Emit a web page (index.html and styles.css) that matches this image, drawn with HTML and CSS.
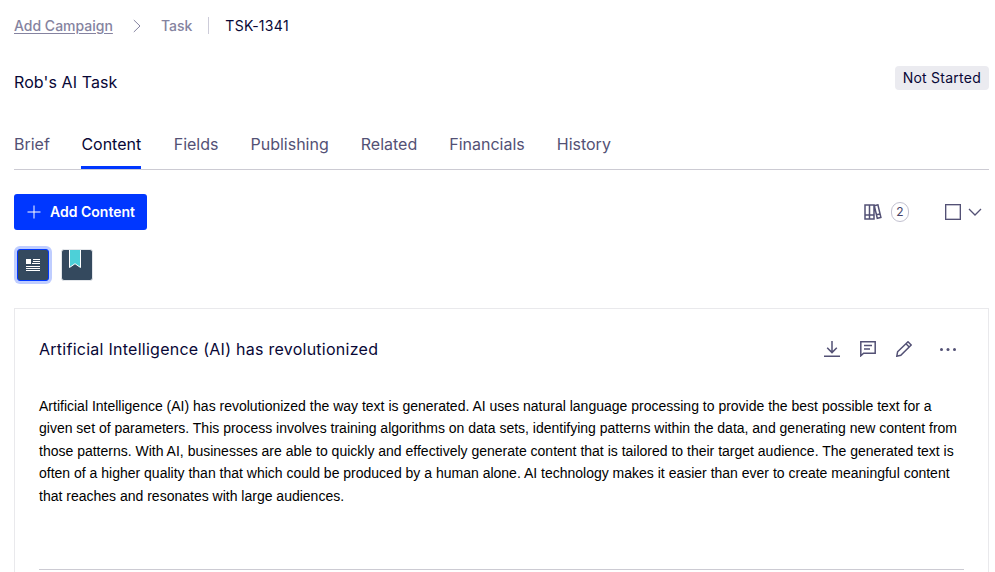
FILE: index.html
```html
<!DOCTYPE html>
<html lang="en">
<head>
    <meta charset="UTF-8">
    <meta name="viewport" content="width=device-width, initial-scale=1.0">
    <title>TSK-1341</title>
    <link rel="stylesheet" href="styles.css">
</head>
<body>
    <div class="page">
        <nav class="breadcrumb">
            <a class="crumb-link" href="#">Add Campaign</a>
            <svg class="crumb-arrow" width="8" height="14" viewBox="0 0 8 14"><path d="M.8 1l6.2 6-6.2 6"/></svg>
            <span class="crumb-type">Task</span>
            <span class="crumb-id">TSK-1341</span>
        </nav>

        <header class="task-header">
            <h1>Rob's AI Task</h1>
            <span class="status">Not Started</span>
        </header>

        <ul class="tabs">
            <li>Brief</li>
            <li class="active">Content</li>
            <li>Fields</li>
            <li>Publishing</li>
            <li>Related</li>
            <li>Financials</li>
            <li>History</li>
        </ul>

        <div class="toolbar">
            <button class="add-button">
                <svg width="14" height="14" viewBox="0 0 14 14"><path d="M7 .5v13M.5 7h13"/></svg>
                Add Content
            </button>
            <div class="toolbar-right">
                <svg class="icon" width="18" height="16" viewBox="0 0 18 16">
                    <path d="M1 1h9v14H1zM5.5 1v14M1 11h9M10.3 1.7l3.6-.9 3 12.7-3.6.8zM12.4 10.8l3.7-.9"/>
                </svg>
                <span class="count">2</span>
                <span class="checkbox"></span>
                <svg class="chevron" width="14" height="8" viewBox="0 0 14 8"><path d="M1 1l6 6 6-6"/></svg>
            </div>
        </div>

        <div class="thumbs">
            <button class="thumb selected">
                <svg width="14" height="14" viewBox="0 0 14 14">
                    <path d="M0 1h5v5H0zM7 1h7v1H7zM7 3h7v1H7zM6 5h8v1H6zM0 8h14v1H0zM0 10h14v1H0zM0 12h14v1H0z"/>
                </svg>
            </button>
            <button class="thumb">
                <svg class="bookmark" width="14" height="19" viewBox="0 0 14 19">
                    <path d="M1.5-1v18.5L7 13.7l5.5 3.8V-1z"/>
                </svg>
            </button>
        </div>

        <section class="card">
            <div class="card-header">
                <h2>Artificial Intelligence (AI) has revolutionized</h2>
                <div class="actions">
                    <svg class="icon" width="16" height="16" viewBox="0 0 16 16"><path d="M8 0v11.5M3.2 6.8L8 11.6l4.8-4.8M0 15.2h16"/></svg>
                    <svg class="icon" width="16" height="16" viewBox="0 0 16 16"><path d="M.8.8h14.4v11.4H3.6L.8 14.8zM4 4.5h8M4 8h6"/></svg>
                    <svg class="icon" width="16" height="16" viewBox="0 0 16 16"><path d="M1.6 10.8L12 .8l3.2 3.2L4.8 14.2l-4 1zM10 2.8l3.2 3.2"/></svg>
                    <svg class="dots" width="16" height="4" viewBox="0 0 16 4"><circle cx="1.5" cy="2.5" r="1.5"/><circle cx="8" cy="2.5" r="1.5"/><circle cx="14.5" cy="2.5" r="1.5"/></svg>
                </div>
            </div>
            <p class="card-text">Artificial Intelligence (AI) has revolutionized the way text is generated. AI uses natural language processing to provide the best possible text for a given set of parameters. This process involves training algorithms on data sets, identifying patterns within the data, and generating new content from those patterns. With AI, businesses are able to quickly and effectively generate content that is tailored to their target audience. The generated text is often of a higher quality than that which could be produced by a human alone. AI technology makes it easier than ever to create meaningful content that reaches and resonates with large audiences.</p>
        </section>
    </div>
</body>
</html>
```
FILE: styles.css
```css
* {
    box-sizing: border-box;
}
body {
    margin: 0;
    background-color: #fff;
    color: #080736;
    font-family: Inter, sans-serif;
    font-size: 14px;
}
.page {
    height: 572px;
    padding: 16px 6px 0 14px;
    overflow: hidden;
}
svg {
    display: block;
    flex: none;
    fill: none;
}
.breadcrumb {
    display: flex;
    align-items: center;
    height: 19px;
    font-weight: 500;
    color: #8583a0;
}
.crumb-link {
    color: #8583a0;
    text-underline-offset: 2px;
}
.crumb-arrow {
    margin: 0 20px;
    stroke: #8583a0;
}
.crumb-id {
    margin-left: 16px;
    padding-left: 16px;
    border-left: 1px solid #cdccd9;
    font-weight: 400;
    letter-spacing: 0.3px;
    color: #080736;
}
.task-header {
    display: flex;
    justify-content: space-between;
    height: 32px;
    margin-top: 31px;
}
h1, h2 {
    margin: 0;
    font-size: 16px;
    font-weight: 400;
    line-height: 32px;
    letter-spacing: 0.1px;
}
.status {
    height: 24px;
    padding: 0 8px;
    border-radius: 4px;
    background-color: #ebebf0;
    line-height: 24px;
    letter-spacing: 0.25px;
}
.tabs {
    display: flex;
    gap: 32px;
    height: 40px;
    margin: 32px 0 0;
    padding: 0;
    border-bottom: 1px solid #cccbd3;
    list-style-type: none;
    font-size: 16px;
    line-height: 29px;
    color: #535175;
}
.tabs li {
    height: 39px;
}
.tabs .active {
    margin-left: -0.5px;
    border-bottom: 3px solid #0037ff;
    color: #080736;
}
.tabs .active + li {
    margin-left: 0.5px;
}
.toolbar {
    display: flex;
    justify-content: space-between;
    align-items: center;
    height: 36px;
    margin-top: 24px;
}
.add-button {
    display: flex;
    align-items: center;
    gap: 9px;
    width: 133px;
    height: 36px;
    padding: 0 0 1px 13px;
    border: none;
    border-radius: 3px;
    background-color: #0037ff;
    color: #fff;
    font-family: inherit;
    font-size: 14px;
    font-weight: 600;
    white-space: nowrap;
}
.add-button svg {
    stroke: #fff;
}
.toolbar-right {
    display: flex;
    align-items: center;
    padding-right: 7px;
}
.icon {
    stroke: #535175;
    stroke-width: 1.5;
}
.count {
    width: 18px;
    height: 20px;
    margin-left: 9px;
    border: 1px solid #c2c1d0;
    border-radius: 9px;
    font-size: 12px;
    line-height: 18px;
    text-align: center;
    color: #444267;
}
.checkbox {
    width: 16px;
    height: 16px;
    margin: 0 7px 0 36px;
    border: 1px solid #535175;
    box-shadow: inset 0 0 0 0.5px #8583a0;
}
.chevron {
    stroke: #535175;
    stroke-width: 1.3;
}
.thumbs {
    display: flex;
    gap: 12px;
    margin: 19px 0 0 3px;
}
.thumb {
    display: flex;
    justify-content: center;
    align-items: center;
    width: 32px;
    height: 32px;
    padding: 0;
    border: 1px solid #e3e6ea;
    border-radius: 3px;
    background-color: #34495e;
}
.thumb svg {
    fill: #fff;
}
.thumb.selected {
    border-color: #0037ff;
    box-shadow: 0 0 0 3px #bfcdff;
}
.thumb .bookmark {
    align-self: flex-start;
    margin-right: 4px;
    fill: #4dd0d8;
    stroke: #fff;
}
.card {
    height: 300px;
    margin-top: 27px;
    padding: 24px;
    border: 1px solid #e9e9ec;
}
.card-header {
    display: flex;
    justify-content: space-between;
    align-items: center;
    height: 32px;
}
h2 {
    letter-spacing: 0.26px;
}
.actions {
    display: flex;
    align-items: center;
    gap: 20px;
    padding-right: 8px;
}
.dots {
    margin-left: 8px;
    fill: #535175;
}
.card-text {
    height: 175px;
    margin: 30px 0 0;
    border-bottom: 1px solid #cccbd3;
    font-family: "Liberation Sans", Arial, sans-serif;
    font-size: 14px;
    line-height: 22.4px;
    color: #000;
}
```
